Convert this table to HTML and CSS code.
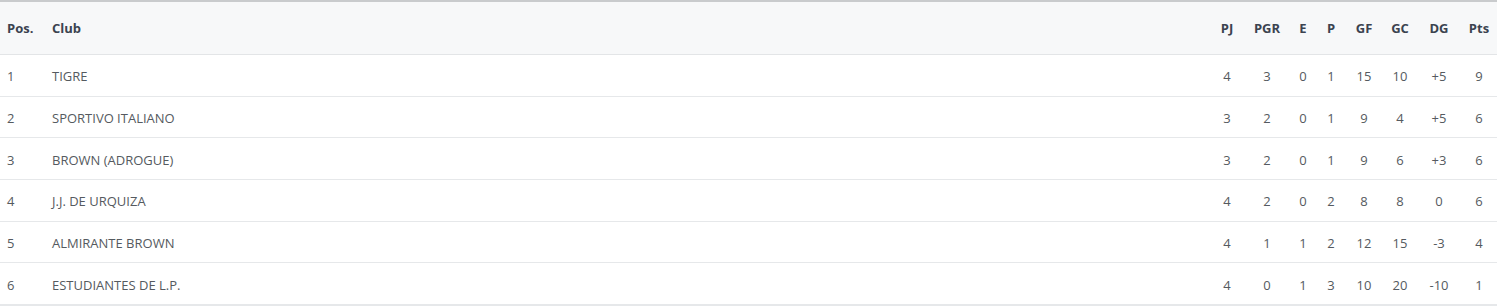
FILE: index.html
```html
<!DOCTYPE html>
<html lang="es">
<head>
<meta charset="utf-8">
<title>Posiciones</title>
<link rel="stylesheet" href="styles.css">
</head>
<body>
<table class="standings">
  <colgroup>
    <col class="c-pos"><col class="c-club"><col class="c-pj"><col class="c-pgr"><col class="c-e"><col class="c-p"><col class="c-gf"><col class="c-gc"><col class="c-dg"><col class="c-pts">
  </colgroup>
  <thead>
    <tr>
      <th class="left">Pos.</th><th class="left">Club</th><th>PJ</th><th>PGR</th><th>E</th><th>P</th><th>GF</th><th>GC</th><th>DG</th><th>Pts</th>
    </tr>
  </thead>
  <tbody>
    <tr><td class="left">1</td><td class="left">TIGRE</td><td>4</td><td>3</td><td>0</td><td>1</td><td>15</td><td>10</td><td>+5</td><td>9</td></tr>
    <tr><td class="left">2</td><td class="left">SPORTIVO ITALIANO</td><td>3</td><td>2</td><td>0</td><td>1</td><td>9</td><td>4</td><td>+5</td><td>6</td></tr>
    <tr><td class="left">3</td><td class="left">BROWN (ADROGUE)</td><td>3</td><td>2</td><td>0</td><td>1</td><td>9</td><td>6</td><td>+3</td><td>6</td></tr>
    <tr><td class="left">4</td><td class="left">J.J. DE URQUIZA</td><td>4</td><td>2</td><td>0</td><td>2</td><td>8</td><td>8</td><td>0</td><td>6</td></tr>
    <tr><td class="left">5</td><td class="left">ALMIRANTE BROWN</td><td>4</td><td>1</td><td>1</td><td>2</td><td>12</td><td>15</td><td>-3</td><td>4</td></tr>
    <tr><td class="left">6</td><td class="left">ESTUDIANTES DE L.P.</td><td>4</td><td>0</td><td>1</td><td>3</td><td>10</td><td>20</td><td>-10</td><td>1</td></tr>
  </tbody>
</table>
</body>
</html>
```
FILE: styles.css
```css
html, body {
  margin: 0;
  padding: 0;
  background: #ffffff;
}
body {
  font-family: "Open Sans", "Noto Sans", sans-serif;
  font-size: 13px;
  color: #555a60;
}
.standings {
  width: 1497px;
  border-collapse: collapse;
  table-layout: fixed;
  border-top: 2px solid #c9cbcd;
  border-bottom: 2px solid #e6e8ea;
}
.c-pos { width: 45px; }
.c-club { width: 1164px; }
.c-pj { width: 36px; }
.c-pgr { width: 44px; }
.c-e { width: 28px; }
.c-p { width: 28px; }
.c-gf { width: 38px; }
.c-gc { width: 34px; }
.c-dg { width: 44px; }
.c-pts { width: 36px; }
.standings th,
.standings td {
  padding: 0;
  text-align: center;
  line-height: 18px;
  white-space: nowrap;
}
.standings .left {
  text-align: left;
  padding-left: 7px;
}
.standings thead th {
  height: 52px;
  background: #f7f8f9;
  color: #3b4350;
  font-weight: 700;
  border-bottom: 1px solid #e3e5e7;
}
.standings tbody td {
  height: 38.7px;
  padding-top: 2px;
  border-bottom: 1px solid #e6e8ea;
}
.standings tbody tr:last-child td {
  border-bottom: none;
}
```
